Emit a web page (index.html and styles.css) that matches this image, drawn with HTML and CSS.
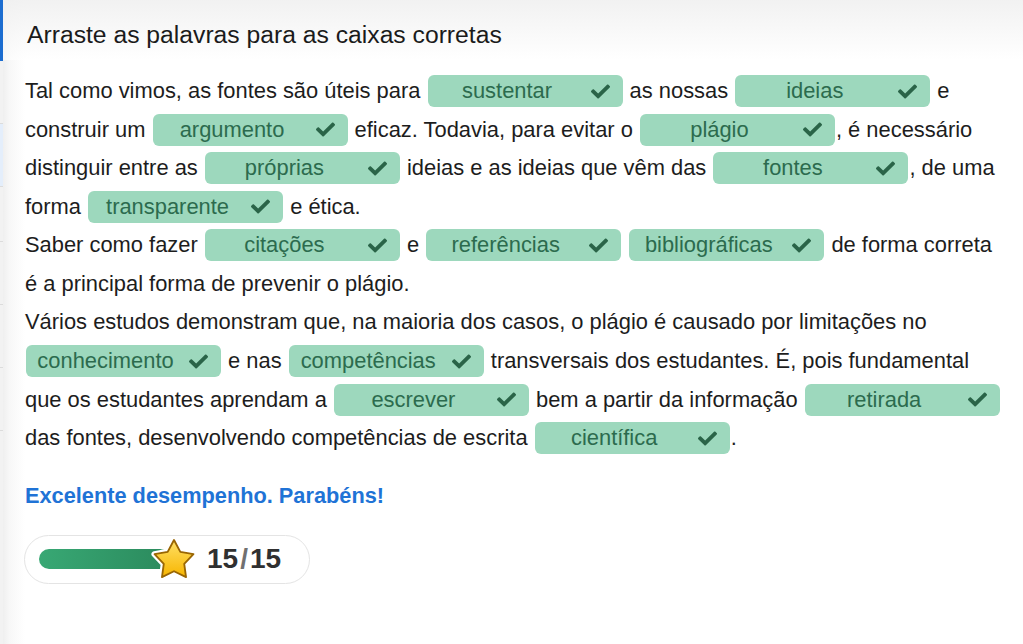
FILE: index.html
```html
<!DOCTYPE html>
<html lang="pt">
<head>
<meta charset="utf-8">
<title>Arraste as palavras</title>
<link rel="stylesheet" href="styles.css">
</head>
<body>
<div class="page">
  <div class="rail">
    <span class="rail-active"></span>
    <span class="rail-item"></span>
    <span class="rail-item rail-soft"></span>
    <span class="rail-item rail-gap"></span>
    <span class="rail-item"></span>
    <span class="rail-item"></span>
    <span class="rail-item"></span>
    <span class="rail-item rail-rest"></span>
  </div>
  <main class="panel">
    <header class="head">
      <h1 class="title">Arraste as palavras para as caixas corretas</h1>
    </header>

    <div class="text">
      <p>Tal como vimos, as fontes são úteis para <span class="chip"><span class="word">sustentar</span><span class="check"><svg viewBox="0 56 512 400"><path d="M173.9 439.4l-166.4-166.4c-10-10-10-26.2 0-36.2l36.2-36.2c10-10 26.2-10 36.2 0L192 312.7 432.1 72.6c10-10 26.2-10 36.2 0l36.2 36.2c10 10 10 26.2 0 36.2l-294.4 294.4c-10 10-26.2 10-36.2 0z"/></svg></span></span> as nossas <span class="chip"><span class="word">ideias</span><span class="check"><svg viewBox="0 56 512 400"><path d="M173.9 439.4l-166.4-166.4c-10-10-10-26.2 0-36.2l36.2-36.2c10-10 26.2-10 36.2 0L192 312.7 432.1 72.6c10-10 26.2-10 36.2 0l36.2 36.2c10 10 10 26.2 0 36.2l-294.4 294.4c-10 10-26.2 10-36.2 0z"/></svg></span></span> e construir um <span class="chip"><span class="word">argumento</span><span class="check"><svg viewBox="0 56 512 400"><path d="M173.9 439.4l-166.4-166.4c-10-10-10-26.2 0-36.2l36.2-36.2c10-10 26.2-10 36.2 0L192 312.7 432.1 72.6c10-10 26.2-10 36.2 0l36.2 36.2c10 10 10 26.2 0 36.2l-294.4 294.4c-10 10-26.2 10-36.2 0z"/></svg></span></span> eficaz. Todavia, para evitar o <span class="chip"><span class="word">plágio</span><span class="check"><svg viewBox="0 56 512 400"><path d="M173.9 439.4l-166.4-166.4c-10-10-10-26.2 0-36.2l36.2-36.2c10-10 26.2-10 36.2 0L192 312.7 432.1 72.6c10-10 26.2-10 36.2 0l36.2 36.2c10 10 10 26.2 0 36.2l-294.4 294.4c-10 10-26.2 10-36.2 0z"/></svg></span></span>, é necessário distinguir entre as <span class="chip"><span class="word">próprias</span><span class="check"><svg viewBox="0 56 512 400"><path d="M173.9 439.4l-166.4-166.4c-10-10-10-26.2 0-36.2l36.2-36.2c10-10 26.2-10 36.2 0L192 312.7 432.1 72.6c10-10 26.2-10 36.2 0l36.2 36.2c10 10 10 26.2 0 36.2l-294.4 294.4c-10 10-26.2 10-36.2 0z"/></svg></span></span> ideias e as ideias que vêm das <span class="chip"><span class="word">fontes</span><span class="check"><svg viewBox="0 56 512 400"><path d="M173.9 439.4l-166.4-166.4c-10-10-10-26.2 0-36.2l36.2-36.2c10-10 26.2-10 36.2 0L192 312.7 432.1 72.6c10-10 26.2-10 36.2 0l36.2 36.2c10 10 10 26.2 0 36.2l-294.4 294.4c-10 10-26.2 10-36.2 0z"/></svg></span></span>, de uma forma <span class="chip"><span class="word">transparente</span><span class="check"><svg viewBox="0 56 512 400"><path d="M173.9 439.4l-166.4-166.4c-10-10-10-26.2 0-36.2l36.2-36.2c10-10 26.2-10 36.2 0L192 312.7 432.1 72.6c10-10 26.2-10 36.2 0l36.2 36.2c10 10 10 26.2 0 36.2l-294.4 294.4c-10 10-26.2 10-36.2 0z"/></svg></span></span> e ética.</p>
      <p>Saber como fazer <span class="chip"><span class="word">citações</span><span class="check"><svg viewBox="0 56 512 400"><path d="M173.9 439.4l-166.4-166.4c-10-10-10-26.2 0-36.2l36.2-36.2c10-10 26.2-10 36.2 0L192 312.7 432.1 72.6c10-10 26.2-10 36.2 0l36.2 36.2c10 10 10 26.2 0 36.2l-294.4 294.4c-10 10-26.2 10-36.2 0z"/></svg></span></span> e <span class="chip"><span class="word">referências</span><span class="check"><svg viewBox="0 56 512 400"><path d="M173.9 439.4l-166.4-166.4c-10-10-10-26.2 0-36.2l36.2-36.2c10-10 26.2-10 36.2 0L192 312.7 432.1 72.6c10-10 26.2-10 36.2 0l36.2 36.2c10 10 10 26.2 0 36.2l-294.4 294.4c-10 10-26.2 10-36.2 0z"/></svg></span></span> <span class="chip"><span class="word">bibliográficas</span><span class="check"><svg viewBox="0 56 512 400"><path d="M173.9 439.4l-166.4-166.4c-10-10-10-26.2 0-36.2l36.2-36.2c10-10 26.2-10 36.2 0L192 312.7 432.1 72.6c10-10 26.2-10 36.2 0l36.2 36.2c10 10 10 26.2 0 36.2l-294.4 294.4c-10 10-26.2 10-36.2 0z"/></svg></span></span> de forma correta é a principal forma de prevenir o plágio.</p>
      <p>Vários estudos demonstram que, na maioria dos casos, o plágio é causado por limitações no <span class="chip"><span class="word">conhecimento</span><span class="check"><svg viewBox="0 56 512 400"><path d="M173.9 439.4l-166.4-166.4c-10-10-10-26.2 0-36.2l36.2-36.2c10-10 26.2-10 36.2 0L192 312.7 432.1 72.6c10-10 26.2-10 36.2 0l36.2 36.2c10 10 10 26.2 0 36.2l-294.4 294.4c-10 10-26.2 10-36.2 0z"/></svg></span></span> e nas <span class="chip"><span class="word">competências</span><span class="check"><svg viewBox="0 56 512 400"><path d="M173.9 439.4l-166.4-166.4c-10-10-10-26.2 0-36.2l36.2-36.2c10-10 26.2-10 36.2 0L192 312.7 432.1 72.6c10-10 26.2-10 36.2 0l36.2 36.2c10 10 10 26.2 0 36.2l-294.4 294.4c-10 10-26.2 10-36.2 0z"/></svg></span></span> transversais dos estudantes. É, pois fundamental que os estudantes aprendam a <span class="chip"><span class="word">escrever</span><span class="check"><svg viewBox="0 56 512 400"><path d="M173.9 439.4l-166.4-166.4c-10-10-10-26.2 0-36.2l36.2-36.2c10-10 26.2-10 36.2 0L192 312.7 432.1 72.6c10-10 26.2-10 36.2 0l36.2 36.2c10 10 10 26.2 0 36.2l-294.4 294.4c-10 10-26.2 10-36.2 0z"/></svg></span></span> bem a partir da informação <span class="chip"><span class="word">retirada</span><span class="check"><svg viewBox="0 56 512 400"><path d="M173.9 439.4l-166.4-166.4c-10-10-10-26.2 0-36.2l36.2-36.2c10-10 26.2-10 36.2 0L192 312.7 432.1 72.6c10-10 26.2-10 36.2 0l36.2 36.2c10 10 10 26.2 0 36.2l-294.4 294.4c-10 10-26.2 10-36.2 0z"/></svg></span></span> das fontes, desenvolvendo competências de escrita <span class="chip"><span class="word">científica</span><span class="check"><svg viewBox="0 56 512 400"><path d="M173.9 439.4l-166.4-166.4c-10-10-10-26.2 0-36.2l36.2-36.2c10-10 26.2-10 36.2 0L192 312.7 432.1 72.6c10-10 26.2-10 36.2 0l36.2 36.2c10 10 10 26.2 0 36.2l-294.4 294.4c-10 10-26.2 10-36.2 0z"/></svg></span></span>.</p>
    </div>

    <p class="feedback">Excelente desempenho. Parabéns!</p>

    <div class="score">
      <span class="bar"></span>
      <svg class="star" viewBox="0 0 43 42">
        <defs>
          <linearGradient id="starFill" x1="0" y1="0" x2="0" y2="1">
            <stop offset="0" stop-color="#ffe066"/>
            <stop offset="1" stop-color="#f7b500"/>
          </linearGradient>
        </defs>
        <path class="star-halo" d="M21.5 2 L27.67 13.51 L40.52 15.82 L31.49 25.24 L33.26 38.18 L21.5 32.5 L9.74 38.18 L11.51 25.24 L2.48 15.82 L15.33 13.51 Z"/>
        <path class="star-body" d="M21.5 2 L27.67 13.51 L40.52 15.82 L31.49 25.24 L33.26 38.18 L21.5 32.5 L9.74 38.18 L11.51 25.24 L2.48 15.82 L15.33 13.51 Z"/>
      </svg>
      <span class="points">15<span class="slash">/</span>15</span>
    </div>
  </main>
</div>
</body>
</html>
```

FILE: styles.css
```css
* { box-sizing: border-box; }

html, body {
  margin: 0;
  padding: 0;
  background: #ffffff;
}

body {
  font-family: "Liberation Sans", Arial, sans-serif;
  color: #1d1d1d;
}

.page {
  display: flex;
  min-height: 644px;
}

.rail {
  width: 3px;
  flex: none;
  display: flex;
  flex-direction: column;
  background: #f2f2f2;
}

.rail-active {
  height: 61px;
  background: #1c6dd0;
}

.rail-item {
  height: 63px;
  border-bottom: 1px solid #dcdcdc;
}

.rail-soft {
  background: #e4eefb;
}

.rail-gap {
  height: 55px;
}

.rail-rest {
  flex: 1;
  border-bottom: none;
}

.panel {
  flex: 1;
  min-width: 0;
  background: linear-gradient(to right, #efefef 0, #f7f7f7 6px, #ffffff 22px);
}

.head {
  height: 60px;
  padding: 20px 0 0 24px;
  background: linear-gradient(to bottom, rgba(240, 240, 240, 0.9), rgba(255, 255, 255, 0.6));
}

.title {
  margin: 0;
  font-size: 24.7px;
  line-height: 30px;
  font-weight: normal;
  color: #1b1b1b;
}

.text {
  margin-top: 12px;
  padding: 0 18px 0 22px;
  font-size: 21.9px;
  line-height: 38.56px;
}

.text p {
  margin: 0;
}

.chip {
  display: inline-flex;
  align-items: center;
  width: 195px;
  height: 32px;
  margin: 0 1px;
  vertical-align: middle;
  position: relative;
  top: -1px;
  background: #9dd8bd;
  border-radius: 6px;
  color: #2c6b4e;
  line-height: 32px;
}

.word {
  flex: 1;
  text-align: center;
  white-space: nowrap;
}

.check {
  width: 36px;
  flex: none;
  display: flex;
  align-items: center;
  padding-left: 4px;
}

.check svg {
  width: 19px;
  height: 15px;
  fill: #2a6448;
}

.feedback {
  margin: 25px 0 0 22px;
  font-size: 21.75px;
  line-height: 26px;
  font-weight: bold;
  color: #1f73d6;
}

.score {
  display: inline-flex;
  align-items: center;
  margin: 26px 0 0 21px;
  width: 286px;
  height: 49px;
  padding: 0 14px;
  background: #ffffff;
  border: 1px solid #e4e4e4;
  border-radius: 25px;
}

.bar {
  width: 131px;
  height: 20px;
  flex: none;
  border-radius: 10px;
  background: linear-gradient(to right, #38a874, #2b8a5d);
}

.star {
  width: 44px;
  height: 43px;
  flex: none;
  margin-left: -18px;
  overflow: visible;
}

.star-halo {
  fill: #ffffff;
  stroke: #ffffff;
  stroke-width: 6;
  stroke-linejoin: round;
}

.star-body {
  fill: url(#starFill);
  stroke: #9a6603;
  stroke-width: 1.8;
  stroke-linejoin: round;
}

.points {
  margin-left: 11px;
  font-size: 28px;
  font-weight: bold;
  color: #303030;
}

.slash {
  color: #707070;
  margin: 0 2px;
}
```
